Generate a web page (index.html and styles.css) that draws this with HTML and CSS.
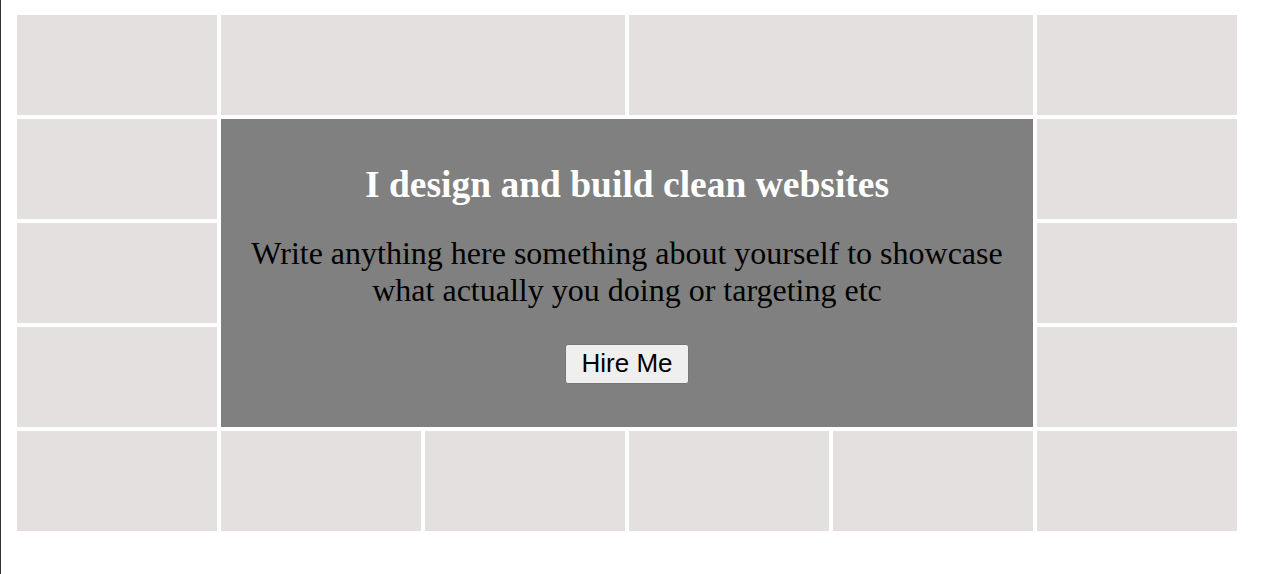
FILE: index.html
```html
<!DOCTYPE html>
<html>
<head>
<meta charset="utf-8">
<link rel="stylesheet" href="styles.css">
</head>
<body>
<div class="grid">
  <div class="cell"></div>
  <div class="cell span2"></div>
  <div class="cell span2"></div>
  <div class="cell"></div>
  <div class="cell"></div>
  <div class="hero">
    <h1 class="hero-title">I design and build clean websites</h1>
    <p class="hero-text">Write anything here something about yourself to showcase what actually you doing or targeting etc</p>
    <button class="hero-btn">Hire Me</button>
  </div>
  <div class="cell"></div>
  <div class="cell"></div>
  <div class="cell"></div>
  <div class="cell"></div>
  <div class="cell"></div>
  <div class="cell"></div>
  <div class="cell"></div>
  <div class="cell"></div>
  <div class="cell"></div>
  <div class="cell"></div>
  <div class="cell"></div>
</div>
</body>
</html>
```
FILE: styles.css
```css
html {
  height: 100%;
  border-left: 1px solid #333;
  box-sizing: border-box;
}
body {
  margin: 0;
  padding: 15px 0 0 16px;
  font-family: "Liberation Serif", "Times New Roman", serif;
}
.grid {
  display: grid;
  grid-template-columns: repeat(6, 200px);
  grid-auto-rows: 100px;
  gap: 4px;
}
.cell {
  background: #e5e0e0;
}
.span2 {
  grid-column: span 2;
}
.hero {
  grid-column: 2 / 6;
  grid-row: 2 / 5;
  background: #808080;
  display: flex;
  flex-direction: column;
  align-items: center;
  justify-content: flex-start;
  text-align: center;
  padding: 44px 20px 0;
}
.hero-title {
  margin: 0 0 29px;
  font-size: 37.5px;
  font-weight: bold;
  color: #fff;
}
.hero-text {
  margin: 0 0 35px;
  font-size: 32px;
  color: #000;
  line-height: 37px;
}
.hero-btn {
  font-family: "Liberation Sans", Arial, sans-serif;
  font-size: 26px;
  padding: 3px 15px 4px;
  background: #efefef;
  border: 1px solid #767676;
  border-radius: 3px;
  color: #000;
}
```
